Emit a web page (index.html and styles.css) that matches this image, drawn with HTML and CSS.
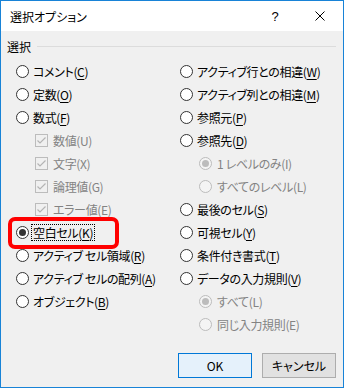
FILE: index.html
```html
<!DOCTYPE html>
<html lang="ja">
<head>
    <meta charset="UTF-8">
    <meta name="viewport" content="width=device-width, initial-scale=1.0">
    <title>選択オプション</title>
    <link rel="stylesheet" href="styles.css">
</head>
<body>
    <div class="window">
        <div class="titlebar">
            <span class="title">選択オプション</span>
            <span class="caption-btn help">?</span>
            <span class="caption-btn close">
                <svg width="10" height="10" viewBox="0 0 10 10"><path d="M0.5 0.5 L9.5 9.5 M9.5 0.5 L0.5 9.5" stroke="#000" stroke-width="1" fill="none"/></svg>
            </span>
        </div>
        <div class="dialog">
            <div class="group-head">
                <span>選択</span>
                <span class="rule"></span>
            </div>
            <div class="columns">
                <div class="col">
                    <div class="opt"><span class="radio"></span><span class="label">コメント(<u>C</u>)</span></div>
                    <div class="opt"><span class="radio"></span><span class="label">定数(<u>O</u>)</span></div>
                    <div class="opt"><span class="radio"></span><span class="label">数式(<u>F</u>)</span></div>
                    <div class="opt sub disabled"><span class="check"><svg width="11" height="11" viewBox="0 0 11 11"><path d="M1.5 5.5 L4 8 L9.5 2.5" stroke="#b4b4b4" stroke-width="1.2" fill="none"/></svg></span><span class="label">数値(U)</span></div>
                    <div class="opt sub disabled"><span class="check"><svg width="11" height="11" viewBox="0 0 11 11"><path d="M1.5 5.5 L4 8 L9.5 2.5" stroke="#b4b4b4" stroke-width="1.2" fill="none"/></svg></span><span class="label">文字(X)</span></div>
                    <div class="opt sub disabled"><span class="check"><svg width="11" height="11" viewBox="0 0 11 11"><path d="M1.5 5.5 L4 8 L9.5 2.5" stroke="#b4b4b4" stroke-width="1.2" fill="none"/></svg></span><span class="label">論理値(G)</span></div>
                    <div class="opt sub disabled"><span class="check"><svg width="11" height="11" viewBox="0 0 11 11"><path d="M1.5 5.5 L4 8 L9.5 2.5" stroke="#b4b4b4" stroke-width="1.2" fill="none"/></svg></span><span class="label">エラー値(E)</span></div>
                    <div class="opt"><span class="radio checked"></span><span class="label focused">空白セル(<u>K</u>)</span></div>
                    <div class="opt"><span class="radio"></span><span class="label">アクティブ セル領域(<u>R</u>)</span></div>
                    <div class="opt"><span class="radio"></span><span class="label">アクティブ セルの配列(<u>A</u>)</span></div>
                    <div class="opt"><span class="radio"></span><span class="label">オブジェクト(<u>B</u>)</span></div>
                </div>
                <div class="col">
                    <div class="opt"><span class="radio"></span><span class="label">アクティブ行との相違(<u>W</u>)</span></div>
                    <div class="opt"><span class="radio"></span><span class="label">アクティブ列との相違(<u>M</u>)</span></div>
                    <div class="opt"><span class="radio"></span><span class="label">参照元(<u>P</u>)</span></div>
                    <div class="opt"><span class="radio"></span><span class="label">参照先(<u>D</u>)</span></div>
                    <div class="opt sub disabled"><span class="radio checked"></span><span class="label">1 レベルのみ(I)</span></div>
                    <div class="opt sub disabled"><span class="radio"></span><span class="label">すべてのレベル(L)</span></div>
                    <div class="opt"><span class="radio"></span><span class="label">最後のセル(<u>S</u>)</span></div>
                    <div class="opt"><span class="radio"></span><span class="label">可視セル(<u>Y</u>)</span></div>
                    <div class="opt"><span class="radio"></span><span class="label">条件付き書式(<u>T</u>)</span></div>
                    <div class="opt"><span class="radio"></span><span class="label">データの入力規則(<u>V</u>)</span></div>
                    <div class="opt sub disabled"><span class="radio checked"></span><span class="label">すべて(L)</span></div>
                    <div class="opt sub disabled"><span class="radio"></span><span class="label">同じ入力規則(E)</span></div>
                </div>
            </div>
            <div class="buttons">
                <button class="btn default">OK</button>
                <button class="btn">キャンセル</button>
            </div>
        </div>
        <div class="highlight"></div>
    </div>
</body>
</html>
```

FILE: styles.css
```css
body {
    margin: 0;
    padding: 0;
    font-family: "Noto Sans CJK JP", "Liberation Sans", sans-serif;
    font-size: 12px;
    font-feature-settings: "palt";
    color: #000;
}

.window {
    position: relative;
    width: 344px;
    height: 388px;
    box-sizing: border-box;
    border: 1px solid #1883d7;
    display: flex;
    flex-direction: column;
    background-color: #f0f0f0;
}

.titlebar {
    height: 30px;
    display: flex;
    align-items: center;
    background-color: #fff;
    padding-left: 9px;
}

.title {
    flex: 1;
}

.caption-btn {
    width: 46px;
    height: 30px;
    display: flex;
    justify-content: center;
    align-items: center;
}

.help {
    font-family: "Liberation Sans", sans-serif;
    font-size: 13px;
    padding-left: 2px;
    box-sizing: border-box;
}

.dialog {
    flex: 1;
    display: flex;
    flex-direction: column;
    padding: 7px 7px 9px 6px;
}

.group-head {
    display: flex;
    align-items: center;
    height: 16px;
}

.group-head .rule {
    flex: 1;
    height: 1px;
    background-color: #dcdcdc;
    margin-left: 6px;
}

.columns {
    display: grid;
    grid-template-columns: 164px 1fr;
    padding-left: 9px;
    margin-top: 6px;
}

.opt {
    height: 23px;
    display: flex;
    align-items: center;
    white-space: nowrap;
}

.opt.sub {
    padding-left: 19px;
}

.opt.disabled {
    color: #838383;
}

.radio {
    width: 13px;
    height: 13px;
    box-sizing: border-box;
    border: 1px solid #333;
    border-radius: 50%;
    background-color: #fff;
    display: flex;
    justify-content: center;
    align-items: center;
    flex: none;
}

.radio.checked::after {
    content: "";
    width: 7px;
    height: 7px;
    border-radius: 50%;
    background-color: #333;
}

.disabled .radio {
    border-color: #bcbcbc;
    background-color: #f4f4f4;
}

.disabled .radio.checked::after {
    background-color: #bcbcbc;
}

.check {
    width: 13px;
    height: 13px;
    box-sizing: border-box;
    border: 1px solid #bcbcbc;
    display: flex;
    flex: none;
}

.label {
    margin-left: 2px;
    padding: 0 1px;
    border: 1px dotted transparent;
    line-height: 15px;
    letter-spacing: -0.35px;
}

.opt.sub .label {
    margin-left: 3px;
}

.label.focused {
    border-color: #000;
}

.label u {
    text-underline-offset: 2px;
}

.buttons {
    margin-top: auto;
    display: flex;
    justify-content: flex-end;
    gap: 10px;
}

.btn {
    width: 74px;
    height: 25px;
    font-family: inherit;
    font-size: 12px;
    font-feature-settings: "palt";
    color: #000;
    background-color: #e1e1e1;
    border: 1px solid #adadad;
    padding: 0;
}

.btn.default {
    background-color: #e5f1fb;
    border-color: #0078d7;
}

.highlight {
    position: absolute;
    left: 7px;
    top: 216px;
    width: 111px;
    height: 32px;
    box-sizing: border-box;
    border: 4px solid #f00;
    border-radius: 7px;
}
```
